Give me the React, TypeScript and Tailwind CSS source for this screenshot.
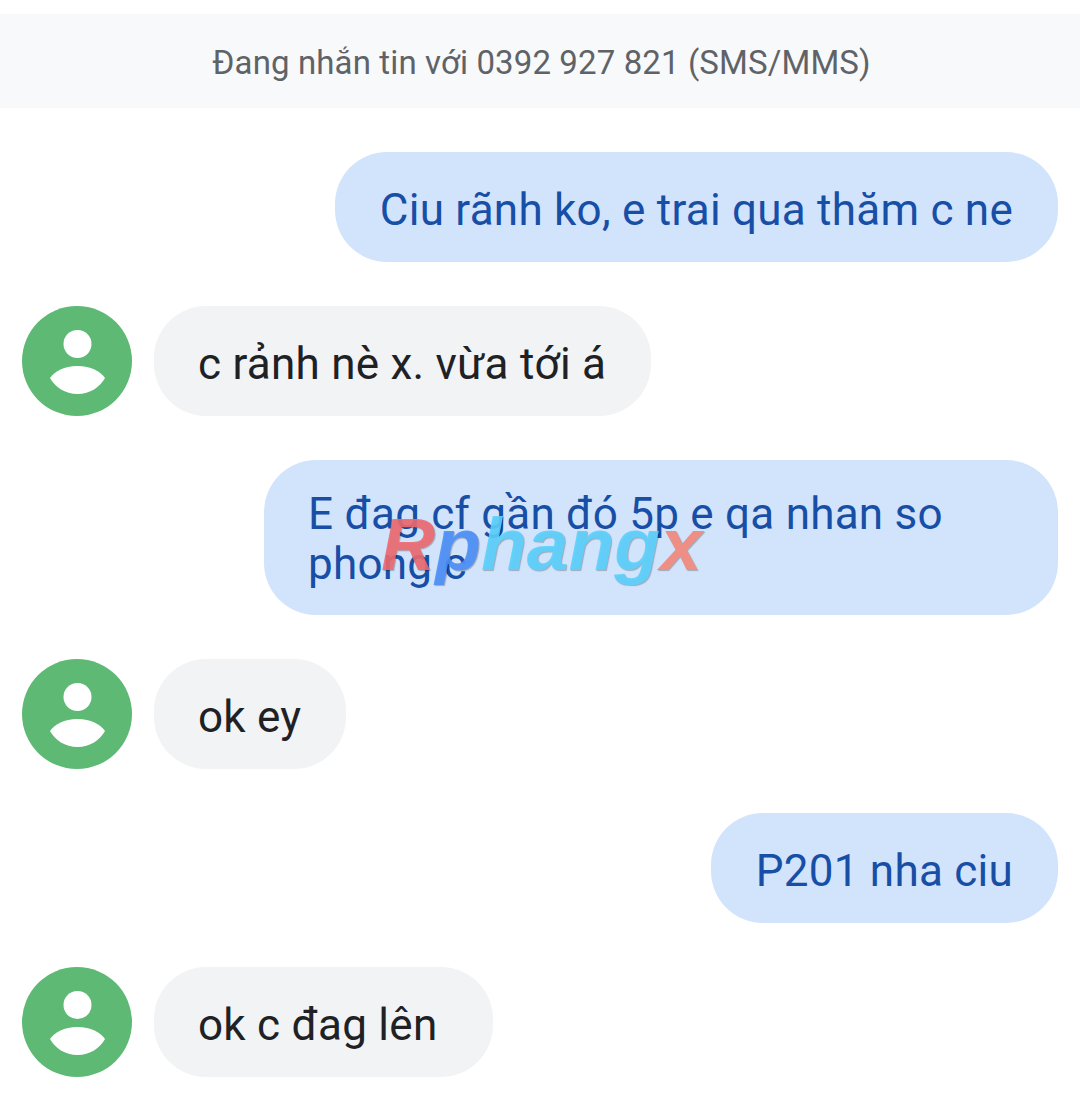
const font = { fontFamily: "Roboto, 'Noto Sans', sans-serif" };

function Avatar() {
  return (
    <svg viewBox="0 0 110 110" className="h-[110px] w-[110px] shrink-0">
      <circle cx="55" cy="55" r="55" fill="#5eb974" />
      <circle cx="55.5" cy="38" r="14" fill="#ffffff" />
      <path d="M28 72 C33 65 42 60 55.5 60 C69 60 78 65 83 72 C78 81 68 88 55.5 88 C43 88 33 81 28 72 Z" fill="#ffffff" />
    </svg>
  );
}

function Sent({ children, className }: { children: React.ReactNode; className?: string }) {
  return (
    <div className="flex justify-end pr-[22px]">
      <div className={`rounded-[52px] bg-[#d2e3fc] px-[45px] pt-[33px] pb-[27px] text-[44px] leading-[50px] tracking-[0.25px] text-[#174ea6] ${className ?? ""}`}>
        {children}
      </div>
    </div>
  );
}

function Received({ children, className }: { children: React.ReactNode; className?: string }) {
  return (
    <div className="flex items-center gap-[22px] pl-[22px]">
      <Avatar />
      <div className={`rounded-[52px] bg-[#f1f3f4] pl-[44px] pr-[45px] pt-[33px] pb-[27px] text-[44px] leading-[50px] tracking-[0.25px] text-[#202124] ${className ?? ""}`}>
        {children}
      </div>
    </div>
  );
}

export default function App() {
  return (
    <div className="relative h-[1104px] w-[1080px] overflow-hidden bg-white pt-[14px]" style={font}>
      <div className="flex h-[94px] items-center justify-center bg-[#f8f9fa] pl-[3px] pt-[3px] text-[33px] tracking-[0.12px] text-[#5f6368]">
        Đang nhắn tin với 0392 927 821 (SMS/MMS)
      </div>
      <div className="mt-[44px] flex flex-col gap-[44px]">
        <Sent>Ciu rãnh ko, e trai qua thăm c ne</Sent>
        <Received>c rảnh nè x. vừa tới á</Received>
        <Sent className="w-[794px] !pl-[44px] !pt-[29px] !pb-[26px]">E đag cf gần đó 5p e qa nhan so phong c</Sent>
        <Received>ok ey</Received>
        <Sent>P201 nha ciu</Sent>
        <Received className="!pr-[56px]">ok c đag lên</Received>
      </div>
      {/* watermark */}
      <div
        className="absolute left-[381px] top-[499px] flex text-[75px] font-bold italic leading-[90px] [text-shadow:1px_1px_1px_rgba(0,0,0,0.25)]"
        style={{ fontFamily: "'Liberation Sans', sans-serif" }}
      >
        <span className="text-[#ee6a70]/90">R</span>
        <span className="text-[#4d90f8]/90">p</span>
        <span className="text-[#5cd2fd]/90">hang</span>
        <span className="text-[#ee8f86]">x</span>
      </div>
    </div>
  );
}
